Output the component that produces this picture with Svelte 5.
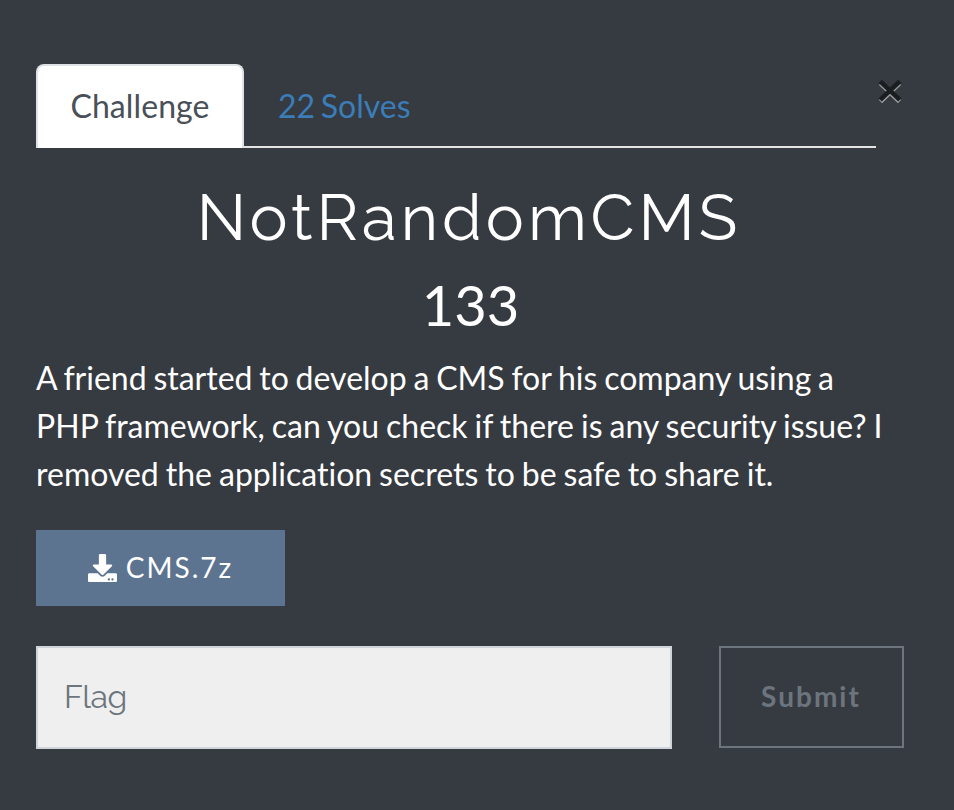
<script>
  const tabs = ['Challenge', '22 Solves'];
  let active = $state(0);
  let flag = $state('');
</script>

<main class="modal">
  <header>
    <nav>
      {#each tabs as tab, i}
        <button class="tab" class:active={active === i} onclick={() => (active = i)}>{tab}</button>
      {/each}
    </nav>
    <button class="close" aria-label="Close">
      <svg width="26" height="28" viewBox="0 0 26 28" fill="none" stroke-width="4.6">
        <path d="M3.500 6.300 22.500 24.700M22.500 6.300 3.500 24.700" stroke="#9a9da0" />
        <path d="M3.200 4.300 22.800 22.900M22.800 4.300 3.200 22.900" stroke="#1b1e21" />
      </svg>
    </button>
  </header>

  <h2>NotRandomCMS</h2>
  <h3>133</h3>
  <p>A friend started to develop a CMS for his company using a<br /><span class="wide">PHP framework, can you check if there is any security issue? I<br />removed the application secrets to be safe to share it.</span></p>

  <button class="file">
    <svg width="29" height="28" viewBox="0 0 512 512" preserveAspectRatio="none" fill="#fff">
      <path d="M216 0h80c13.3 0 24 10.7 24 24v168h87.700c17.800 0 26.700 21.500 14.100 34.100L269.700 378.300c-7.500 7.500-19.800 7.500-27.300 0L90.100 226.100c-12.600-12.600-3.700-34.100 14.100-34.100H192V24c0-13.300 10.700-24 24-24zm296 376v112c0 13.300-10.700 24-24 24H24c-13.300 0-24-10.700-24-24V376c0-13.300 10.700-24 24-24h146.700l49 49c20.100 20.100 52.500 20.100 72.600 0l49-49H488c13.300 0 24 10.700 24 24zm-124 88c0-11-9-20-20-20s-20 9-20 20 9 20 20 20 20-9 20-20zm64 0c0-11-9-20-20-20s-20 9-20 20 9 20 20 20 20-9 20-20z" />
    </svg>
    <span>CMS.7z</span>
  </button>

  <form onsubmit={(e) => e.preventDefault()}>
    <input placeholder="Flag" aria-label="Flag" bind:value={flag} />
    <button class="submit">Submit</button>
  </form>
</main>

<style>
  :global(body) {
    background: #363a41;
  }
  .modal {
    box-sizing: border-box;
    width: 954px;
    height: 810px;
    padding: 64px 50px 0 36px;
    overflow: hidden;
    background: #363a41;
    color: #fff;
    font-family: Lato, sans-serif;
    font-size: 32px;
    font-variant-ligatures: none;
  }
  button,
  input {
    box-sizing: border-box;
    margin: 0;
    border: 0;
    border-radius: 0;
    padding: 0;
    background: none;
    font: inherit;
  }
  header {
    display: flex;
    align-items: flex-start;
  }
  nav {
    display: flex;
    box-sizing: border-box;
    width: 840px;
    height: 84px;
    border-bottom: 2px solid #e3e3e3;
  }
  .tab {
    height: 84px;
    padding: 0 32px 2px;
    border: 2px solid transparent;
    border-bottom: 0;
    border-radius: 8px 8px 0 0;
    color: #3b7db8;
    line-height: 78px;
    word-spacing: -2.500px;
  }
  .tab.active {
    width: 208px;
    border-color: #dee2e6;
    background: #fff;
    color: #495057;
    letter-spacing: 0.100px;
  }
  .close {
    display: flex;
    margin: 13px 0 0 1px;
  }
  h2,
  h3,
  p {
    margin: 0;
    font-weight: 400;
  }
  h2 {
    padding: 31px 2px 0 0;
    font: 400 64px/77px Raleway, Lato, sans-serif;
    letter-spacing: 4px;
    text-align: center;
  }
  h3 {
    padding: 15px 0 0 1px;
    font-size: 56px;
    line-height: 67px;
    text-align: center;
  }
  p {
    padding-top: 16px;
    line-height: 48px;
    white-space: nowrap;
    word-spacing: -1.400px;
  }
  .wide {
    word-spacing: -1.200px;
  }
  .file {
    display: flex;
    align-items: center;
    justify-content: center;
    gap: 9px;
    width: 249px;
    height: 76px;
    margin-top: 32px;
    background: #5d7491;
    color: #fff;
    font-size: 28px;
    letter-spacing: 2px;
  }
  .file span {
    padding-bottom: 2px;
  }
  form {
    display: flex;
    align-items: flex-start;
    gap: 47px;
    margin-top: 40px;
  }
  input {
    width: 636px;
    height: 103px;
    padding: 0 26px 2px;
    border: 2px solid #ced4da;
    outline: 0;
    background: #efefef;
    color: #495057;
    font-family: Raleway, Lato, sans-serif;
    letter-spacing: -0.500px;
  }
  input::placeholder {
    color: #6c757d;
    opacity: 1;
  }
  .submit {
    width: 185px;
    height: 102px;
    padding: 0 1px 2px 0;
    border: 2px solid #6c757d;
    color: #6c757d;
    font-size: 28px;
    font-weight: 700;
    letter-spacing: 2px;
  }
</style>
